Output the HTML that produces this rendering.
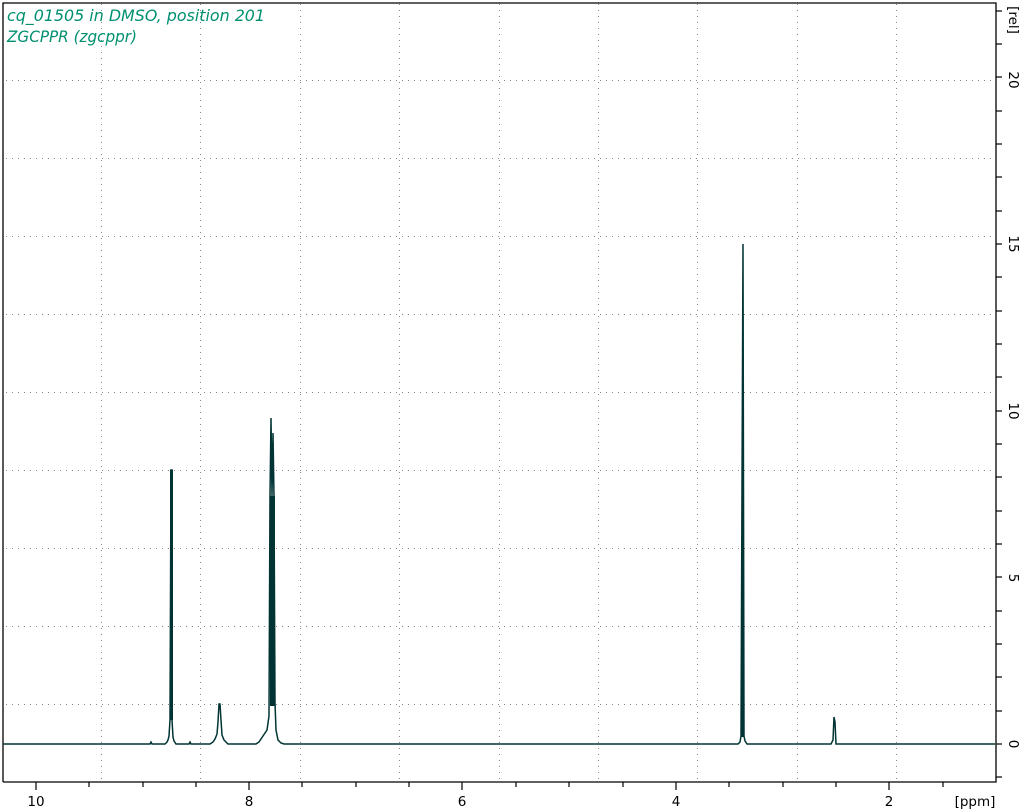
<!DOCTYPE html>
<html><head><style>
html,body{margin:0;padding:0;background:#fff;width:1027px;height:811px;overflow:hidden}
svg text{font-family:"DejaVu Sans","Liberation Sans",sans-serif}
</style></head><body>
<svg width="1027" height="811" xmlns="http://www.w3.org/2000/svg">
<rect width="1027" height="811" fill="#fff"/>
<g stroke="#888" stroke-width="1" stroke-dasharray="1,5">
<line x1="101.5" y1="4" x2="101.5" y2="781"/><line x1="200.5" y1="4" x2="200.5" y2="781"/>
<line x1="300.5" y1="4" x2="300.5" y2="781"/><line x1="399.5" y1="4" x2="399.5" y2="781"/>
<line x1="499.5" y1="4" x2="499.5" y2="781"/><line x1="598.5" y1="4" x2="598.5" y2="781"/>
<line x1="697.5" y1="4" x2="697.5" y2="781"/><line x1="797.5" y1="4" x2="797.5" y2="781"/>
<line x1="896.5" y1="4" x2="896.5" y2="781"/>
<line x1="6" y1="80.5" x2="995" y2="80.5"/><line x1="6" y1="158.5" x2="995" y2="158.5"/>
<line x1="6" y1="236.5" x2="995" y2="236.5"/><line x1="6" y1="314.5" x2="995" y2="314.5"/>
<line x1="6" y1="392.5" x2="995" y2="392.5"/><line x1="6" y1="470.5" x2="995" y2="470.5"/>
<line x1="6" y1="548.5" x2="995" y2="548.5"/><line x1="6" y1="626.5" x2="995" y2="626.5"/>
<line x1="6" y1="704.5" x2="995" y2="704.5"/>
</g>
<g stroke="#000" stroke-width="1.3" fill="none">
<polyline points="3,782 3,3 996,3 996,782 3,782"/>
</g>
<g stroke="#000" stroke-width="1.2">
<line x1="36" y1="782" x2="36" y2="790"/><line x1="89" y1="782" x2="89" y2="787"/>
<line x1="143" y1="782" x2="143" y2="787"/><line x1="196" y1="782" x2="196" y2="787"/>
<line x1="249" y1="782" x2="249" y2="790"/><line x1="302" y1="782" x2="302" y2="787"/>
<line x1="356" y1="782" x2="356" y2="787"/><line x1="409" y1="782" x2="409" y2="787"/>
<line x1="462" y1="782" x2="462" y2="790"/><line x1="516" y1="782" x2="516" y2="787"/>
<line x1="569" y1="782" x2="569" y2="787"/><line x1="623" y1="782" x2="623" y2="787"/>
<line x1="676" y1="782" x2="676" y2="790"/><line x1="729" y1="782" x2="729" y2="787"/>
<line x1="783" y1="782" x2="783" y2="787"/><line x1="836" y1="782" x2="836" y2="787"/>
<line x1="889" y1="782" x2="889" y2="790"/><line x1="943" y1="782" x2="943" y2="787"/>
</g>
<g stroke="#000" stroke-width="1.2">
<line x1="996" y1="777" x2="1002" y2="777"/><line x1="996" y1="744" x2="1002" y2="744"/>
<line x1="996" y1="711" x2="1002" y2="711"/><line x1="996" y1="677" x2="1002" y2="677"/>
<line x1="996" y1="644" x2="1002" y2="644"/><line x1="996" y1="611" x2="1002" y2="611"/>
<line x1="996" y1="577" x2="1002" y2="577"/><line x1="996" y1="544" x2="1002" y2="544"/>
<line x1="996" y1="511" x2="1002" y2="511"/><line x1="996" y1="477" x2="1002" y2="477"/>
<line x1="996" y1="444" x2="1002" y2="444"/><line x1="996" y1="411" x2="1002" y2="411"/>
<line x1="996" y1="377" x2="1002" y2="377"/><line x1="996" y1="344" x2="1002" y2="344"/>
<line x1="996" y1="311" x2="1002" y2="311"/><line x1="996" y1="277" x2="1002" y2="277"/>
<line x1="996" y1="244" x2="1002" y2="244"/><line x1="996" y1="211" x2="1002" y2="211"/>
<line x1="996" y1="177" x2="1002" y2="177"/><line x1="996" y1="144" x2="1002" y2="144"/>
<line x1="996" y1="111" x2="1002" y2="111"/><line x1="996" y1="77" x2="1002" y2="77"/>
<line x1="996" y1="44" x2="1002" y2="44"/><line x1="996" y1="11" x2="1002" y2="11"/>
</g>
<g font-size="13.5" fill="#000">
<text x="36" y="806" text-anchor="middle">10</text>
<text x="249" y="806" text-anchor="middle">8</text>
<text x="462" y="806" text-anchor="middle">6</text>
<text x="676" y="806" text-anchor="middle">4</text>
<text x="889" y="806" text-anchor="middle">2</text>
<text x="975" y="806" text-anchor="middle">[ppm]</text>
<text transform="translate(1009,744) rotate(90)" text-anchor="middle">0</text>
<text transform="translate(1009,578) rotate(90)" text-anchor="middle">5</text>
<text transform="translate(1009,411) rotate(90)" text-anchor="middle">10</text>
<text transform="translate(1009,244) rotate(90)" text-anchor="middle">15</text>
<text transform="translate(1009,80) rotate(90)" text-anchor="middle">20</text>
<text transform="translate(1009,20) rotate(90)" text-anchor="middle">[rel]</text>
</g>
<g fill="#009070" font-size="16" font-style="italic">
<text x="7" y="21" textLength="258" lengthAdjust="spacingAndGlyphs">cq_01505 in DMSO, position 201</text>
<text x="7" y="42" textLength="130" lengthAdjust="spacingAndGlyphs">ZGCPPR (zgcppr)</text>
</g>
<g stroke="#003333" stroke-width="1.5" fill="none">
<path d="M3,744 L150,744 L151,742 L152,744 L165,744 L167,742 L168,740 L169,736 L170,720 L171,470 L172,470 L172,720 L173,737 L174,741 L176,744 L189,744 L190,742 L191,744 L210,744 L213,742 L215,739 L217,734 L218,722 L219,704 L220,704 L221,720 L222,735 L224,740 L226,742 L228,744 L256,744 L259,742 L261,739 L263,736 L267,730 L269,716 L270,496 L271,418 L272,496 L273,433 L274,496 L275,703 L276,730 L278,740 L281,743 L284,744 L738,744 L740,742 L741,736 L742,485 L743,244 L744,736 L745,741 L747,744 L831,744 L833,740 L834,717 L835,722 L836,744 L995,744"/>
</g>
<g fill="#003333">
<rect x="170" y="470" width="3" height="250"/>
<rect x="270" y="496" width="5" height="210"/>
<rect x="741.5" y="485" width="2.5" height="252"/>
</g>
</svg>
</body></html>
